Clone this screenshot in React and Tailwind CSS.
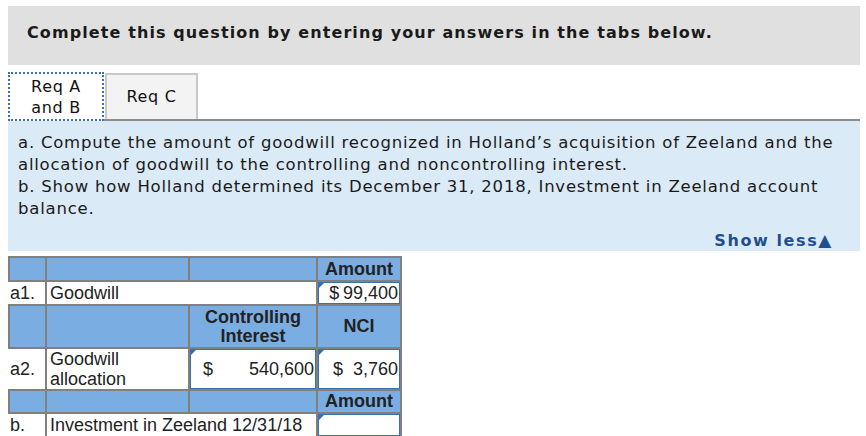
import React from 'react';

const verdana = { fontFamily: '"DejaVu Sans", Verdana, sans-serif' };
const arial = { fontFamily: '"Liberation Sans", Arial, sans-serif' };

// little blue flag in the corner of each answer box
function Flag() {
  return (
    <svg className="absolute left-0 top-0" width="5" height="5" viewBox="0 0 5 5">
      <polygon points="0,0 5,0 0,5" fill="#2f6fc0" />
    </svg>
  );
}

function InputCell({ children, className = '' }) {
  return (
    <div className={`relative h-full border border-[#3a6fb5] bg-white ${className}`}>
      <Flag />
      {children}
    </div>
  );
}

function App() {
  const head = 'bg-[#7aaee3] border-2 border-[#808080]';
  const cell = 'border-2 border-[#808080] bg-white';

  return (
    <div className="w-[866px] h-[436px] overflow-hidden bg-white pt-[6px] pl-[8px] pr-[6px]">
      <div className="h-[59px] bg-[#e0e0e0] flex items-center pl-[19px] pb-[6px]" style={verdana}>
        <h1 className="text-[16px] font-bold tracking-[1.1px] text-[#1a1a1a] whitespace-nowrap">
          Complete this question by entering your answers in the tabs below.
        </h1>
      </div>

      <div className="mt-[7px] flex items-end border-b-2 border-[#8c8c8c]" style={verdana}>
        <div className="w-[96px] h-[49px] -mb-[2px] bg-white border-2 border-dotted border-[#3a6fb5] flex items-center justify-center text-center text-[16px] tracking-[0.7px] leading-[21px] text-[#111]">
          Req A<br />and B
        </div>
        <div className="w-[93px] h-[46px] ml-[1px] bg-[#f3f3f3] border-2 border-b-0 border-[#c9c9c9] flex items-center justify-center text-[16px] tracking-[0.7px] text-[#111]">
          Req C
        </div>
      </div>

      <div className="h-[130px] bg-[#dbeaf7] px-[10px] pt-[11px] flex flex-col" style={verdana}>
        <p className="text-[16.5px] tracking-[0.78px] leading-[22px] text-[#1a1a1a] whitespace-nowrap">
          a. Compute the amount of goodwill recognized in Holland’s acquisition of Zeeland and the
          <br />
          allocation of goodwill to the controlling and noncontrolling interest.
          <br />
          b. Show how Holland determined its December 31, 2018, Investment in Zeeland account
          <br />
          balance.
        </p>
        <div className="mt-auto pr-[17px] flex justify-end">
          <span className="text-[16px] leading-[20px] font-bold tracking-[1.6px] text-[#1d4f91] cursor-pointer">
            Show less<span className="text-[17px]">▲</span>
          </span>
        </div>
      </div>

      <table className="mt-[5px] border-collapse text-[18px] text-[#222]" style={arial}>
        <colgroup>
          <col className="w-[37px]" />
          <col className="w-[143px]" />
          <col className="w-[128px]" />
          <col className="w-[84px]" />
        </colgroup>
        <tbody>
          <tr className="h-[24px]">
            <td className={head} />
            <td className={head} />
            <td className={head} />
            <td className={`${head} text-center font-bold leading-[19px]`}>Amount</td>
          </tr>
          <tr className="h-[24px]">
            <td className={`${cell} border-l-0 pl-[1px] leading-[20px]`}>a1.</td>
            <td className={`${cell} pl-[3px] leading-[20px]`} colSpan={2}>Goodwill</td>
            <td className={`${cell} p-0 h-[24px]`}>
              <InputCell className="text-right pr-[1px] leading-[20px]">$&thinsp;99,400</InputCell>
            </td>
          </tr>
          <tr className="h-[43px]">
            <td className={head} />
            <td className={head} />
            <td className={`${head} text-center font-bold leading-[19px]`}>
              Controlling<br />Interest
            </td>
            <td className={`${head} text-center font-bold`}>NCI</td>
          </tr>
          <tr className="h-[40px]">
            <td className={`${cell} border-l-0 pl-[1px]`}>a2.</td>
            <td className={`${cell} pl-[3px] leading-[20px]`}>
              Goodwill<br />allocation
            </td>
            <td className={`${cell} p-0 h-[40px]`}>
              <InputCell className="flex items-center justify-between pl-[12px] pr-[1px]">
                <span>$</span>
                <span>540,600</span>
              </InputCell>
            </td>
            <td className={`${cell} p-0 h-[40px]`}>
              <InputCell className="flex items-center justify-end pr-[1px]">$&nbsp;&nbsp;3,760</InputCell>
            </td>
          </tr>
          <tr className="h-[23px]">
            <td className={head} />
            <td className={head} />
            <td className={head} />
            <td className={`${head} text-center font-bold leading-[19px]`}>Amount</td>
          </tr>
          <tr className="h-[24px]">
            <td className={`${cell} border-l-0 pl-[1px] leading-[20px]`}>b.</td>
            <td className={`${cell} pl-[3px] leading-[20px]`} colSpan={2}>Investment in Zeeland 12/31/18</td>
            <td className={`${cell} p-0 h-[24px]`}>
              <InputCell />
            </td>
          </tr>
        </tbody>
      </table>
    </div>
  );
}

export default App;
